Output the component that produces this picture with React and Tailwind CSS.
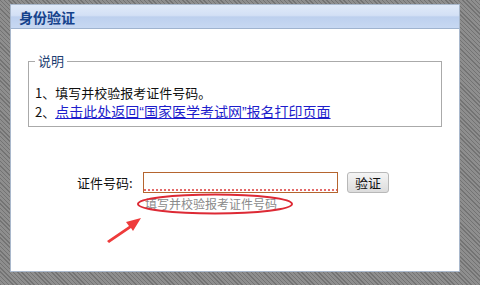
export default function App() {
  const font = { fontFamily: '"Noto Sans CJK SC", "Liberation Sans", sans-serif' };
  const latinFirst = { fontFamily: '"Liberation Sans", "Noto Sans CJK SC", sans-serif' };
  return (
    <div
      className="relative w-[480px] h-[285px] overflow-hidden pt-[4px] pl-[10px] bg-[repeating-linear-gradient(45deg,#737373_0px,#737373_1px,#8e8e8e_1px,#8e8e8e_3px)]"
      style={font}
    >
      <div className="w-[450px] h-[268px] bg-white border border-[#a9b8cc] flex flex-col">
        <div className="h-[24px] flex items-center pl-[8px] border-b border-[#9fb3cf] bg-[linear-gradient(to_bottom,#e0eaf9_0%,#d3e0f5_45%,#bdd0ee_52%,#c7d8f2_100%)]">
          <span className="text-[14px] font-bold text-[#15428b] leading-none">身份验证</span>
        </div>

        <div className="pt-[24px] px-[17px]">
          <fieldset className="border border-[#aaaaaa] h-[74px] px-[6px] pt-[14px]">
            <legend className="px-[3px] text-[13px] text-[#1f3f73] leading-[16px]">说明</legend>
            <p className="text-[13px] leading-[19px] text-[#111]">1、填写并校验报考证件号码。</p>
            <p className="text-[13px] leading-[19px] text-[#111]">
              2、<a href="#" className="text-[#1d1dcc] underline text-[14px]" style={latinFirst}>点击此处返回“国家医学考试网”报名打印页面</a>
            </p>
          </fieldset>
        </div>

        <div className="mt-[45px] pl-[66px] flex items-center">
          <span className="text-[13px] text-[#111] w-[66px]">证件号码:</span>
          <div className="w-[195px] h-[21px] border border-[#b5652f] bg-white relative">
            <div className="absolute left-0 right-0 bottom-[1px] h-[2px] bg-[repeating-linear-gradient(90deg,#e46a6a_0px,#e46a6a_2px,transparent_2px,transparent_4px)]" />
          </div>
          <button className="ml-[9px] w-[42px] h-[21px] border border-[#b8b8b8] rounded-[3px] text-[13px] text-[#111] leading-none bg-[linear-gradient(to_bottom,#f5f5f5,#dcdcdc)]">
            验证
          </button>
        </div>
        <div className="pl-[134px] mt-[3px] text-[12px] leading-[16px] text-[#8a8a8a]">填写并校验报考证件号码</div>
      </div>

      <svg className="absolute left-0 top-0 pointer-events-none" width="480" height="285" viewBox="0 0 480 285">
        <ellipse cx="215" cy="204" rx="77" ry="9.5" fill="none" stroke="#dd2a35" strokeWidth="2" />
        <path d="M107 241 L129 226 L126 222 L141 218 L133 231 L131 228 L109 243 Z" fill="#ee3b3b" />
      </svg>
    </div>
  );
}
